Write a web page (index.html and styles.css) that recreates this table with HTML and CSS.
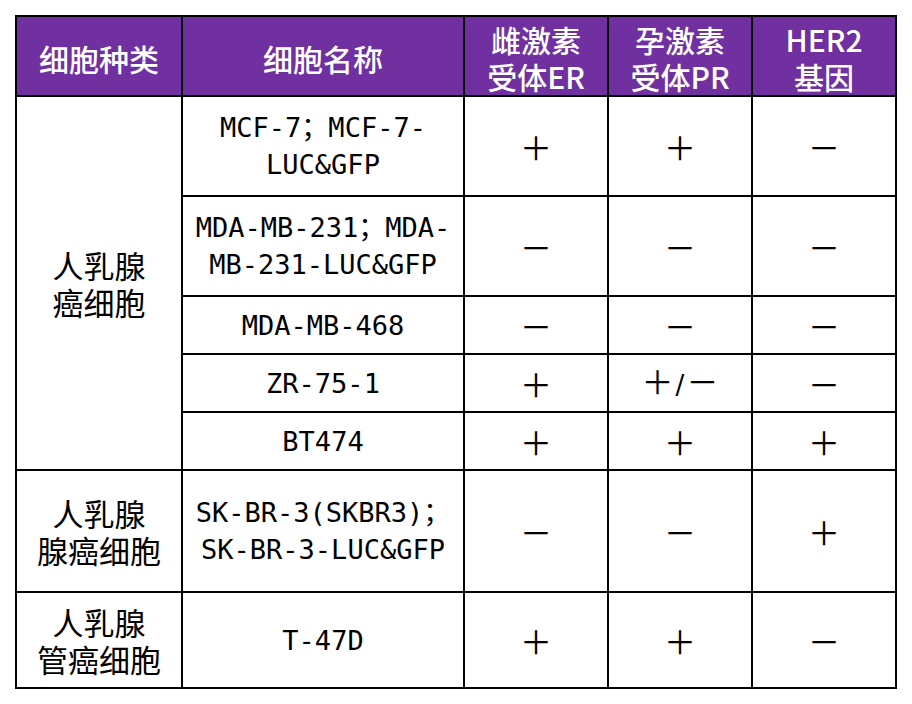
FILE: index.html
```html
<!DOCTYPE html>
<html lang="zh-CN">
<head>
<meta charset="utf-8">
<title>乳腺癌细胞受体表达</title>
<link rel="stylesheet" href="styles.css">
</head>
<body>
<div class="page">
<table class="cells">
  <colgroup>
    <col class="c-type">
    <col class="c-name">
    <col class="c-val">
    <col class="c-val">
    <col class="c-val">
  </colgroup>
  <thead>
    <tr class="r-head">
      <th>细胞种类</th>
      <th>细胞名称</th>
      <th>雌激素<br>受体ER</th>
      <th>孕激素<br>受体PR</th>
      <th>HER2<br>基因</th>
    </tr>
  </thead>
  <tbody>
    <tr class="r-tall">
      <td class="type" rowspan="5">人乳腺<br>癌细胞</td>
      <td class="name">MCF-7；MCF-7-<br>LUC&amp;GFP</td>
      <td class="sign">＋</td>
      <td class="sign">＋</td>
      <td class="sign">－</td>
    </tr>
    <tr class="r-tall">
      <td class="name">MDA-MB-231；MDA-<br>MB-231-LUC&amp;GFP</td>
      <td class="sign">－</td>
      <td class="sign">－</td>
      <td class="sign">－</td>
    </tr>
    <tr class="r-short">
      <td class="name">MDA-MB-468</td>
      <td class="sign">－</td>
      <td class="sign">－</td>
      <td class="sign">－</td>
    </tr>
    <tr class="r-short">
      <td class="name">ZR-75-1</td>
      <td class="sign">＋</td>
      <td class="sign">＋<span class="slash">/</span>－</td>
      <td class="sign">－</td>
    </tr>
    <tr class="r-short">
      <td class="name">BT474</td>
      <td class="sign">＋</td>
      <td class="sign">＋</td>
      <td class="sign">＋</td>
    </tr>
    <tr class="r-sk">
      <td class="type">人乳腺<br>腺癌细胞</td>
      <td class="name">SK-BR-3(SKBR3)；<br>SK-BR-3-LUC&amp;GFP</td>
      <td class="sign">－</td>
      <td class="sign">－</td>
      <td class="sign">＋</td>
    </tr>
    <tr class="r-t47">
      <td class="type">人乳腺<br>管癌细胞</td>
      <td class="name">T-47D</td>
      <td class="sign">＋</td>
      <td class="sign">＋</td>
      <td class="sign">－</td>
    </tr>
  </tbody>
</table>
</div>
</body>
</html>
```

FILE: styles.css
```css
html, body {
  margin: 0;
  padding: 0;
  background: #ffffff;
}

.page {
  padding: 15px;
}

.cells {
  table-layout: fixed;
  width: 882px;
  border-collapse: separate;
  border-spacing: 0;
  border-top: 2px solid #000;
  border-left: 2px solid #000;
  font-family: "Noto Sans CJK SC", sans-serif;
  color: #000;
}

.c-type { width: 166px; }
.c-name { width: 282px; }
.c-val { width: 144px; }

.cells th,
.cells td {
  box-sizing: border-box;
  padding: 0;
  border-right: 2px solid #000;
  border-bottom: 2px solid #000;
  text-align: center;
  vertical-align: middle;
}

.cells th {
  background: #7030a0;
  color: #ffffff;
  font-weight: 500;
  font-size: 30px;
  line-height: 37px;
  padding-top: 4px;
}

.r-head { height: 80px; }
.r-tall { height: 100px; }
.r-short { height: 58px; }
.r-sk { height: 122px; }
.r-t47 { height: 96px; }

.type {
  font-size: 31px;
  line-height: 37px;
  padding-top: 3px;
}

.name {
  font-family: "DejaVu Sans Mono", "Noto Sans CJK SC", monospace;
  font-size: 27px;
  line-height: 37px;
  padding-top: 3px;
}

.sign {
  font-family: "Noto Sans CJK SC", sans-serif;
  font-size: 32px;
  line-height: 37px;
  font-weight: 400;
  padding-top: 5px;
}

.slash {
  font-family: "DejaVu Sans", sans-serif;
  font-size: 26px;
  margin: 0 2px;
}
```
